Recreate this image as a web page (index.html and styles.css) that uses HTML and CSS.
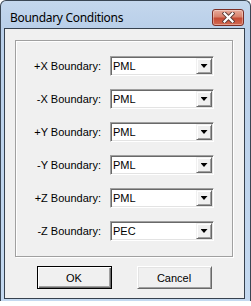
FILE: index.html
```html
<!DOCTYPE html>
<html lang="en">
<head>
    <meta charset="UTF-8">
    <title>Boundary Conditions</title>
    <link rel="stylesheet" href="styles.css">
</head>
<body>
    <div class="window">
        <div class="titlebar">
            <span class="title">Boundary Conditions</span>
            <div class="close">
                <svg width="13" height="11" viewBox="0 0 13 11">
                    <path d="M2.5 1.5 L10.5 9.5 M10.5 1.5 L2.5 9.5" stroke="#5a3a36" stroke-width="4" stroke-linecap="square"/>
                    <path d="M2.5 1.5 L10.5 9.5 M10.5 1.5 L2.5 9.5" stroke="#ffffff" stroke-width="2.2" stroke-linecap="square"/>
                </svg>
            </div>
        </div>
        <div class="client">
            <div class="group">
                <div class="row"><span class="label">+X Boundary:</span><div class="combo"><span class="value">PML</span><span class="drop"></span></div></div>
                <div class="row"><span class="label">-X Boundary:</span><div class="combo"><span class="value">PML</span><span class="drop"></span></div></div>
                <div class="row"><span class="label">+Y Boundary:</span><div class="combo"><span class="value">PML</span><span class="drop"></span></div></div>
                <div class="row"><span class="label">-Y Boundary:</span><div class="combo"><span class="value">PML</span><span class="drop"></span></div></div>
                <div class="row"><span class="label">+Z Boundary:</span><div class="combo"><span class="value">PML</span><span class="drop"></span></div></div>
                <div class="row"><span class="label">-Z Boundary:</span><div class="combo"><span class="value">PEC</span><span class="drop"></span></div></div>
            </div>
            <div class="buttons">
                <div class="btn default">OK</div>
                <div class="btn">Cancel</div>
            </div>
        </div>
    </div>
</body>
</html>
```

FILE: styles.css
```css
* {
    box-sizing: border-box;
}

body {
    margin: 0;
    background-color: #ffffff;
    font-family: "Liberation Sans", Arial, sans-serif;
    font-size: 11px;
    color: #000;
}

.window {
    width: 251px;
    height: 301px;
    border: 1px solid #3a4654;
    border-bottom: 0;
    border-radius: 6px 6px 0 0;
    background: linear-gradient(#c4d7ed, #b9cfe9 28px, #c4d9f0);
    padding: 0 5px 2px 3px;
    display: flex;
    flex-direction: column;
}

.titlebar {
    height: 27px;
    display: flex;
    align-items: flex-start;
}

.title {
    font-family: "Noto Sans", sans-serif;
    font-size: 12px;
    line-height: 15px;
    margin-top: 9px;
    margin-left: 6px;
    letter-spacing: -0.3px;
}

.close {
    margin-left: auto;
    margin-top: 8px;
    margin-right: 1px;
    width: 32px;
    height: 17px;
    border: 1px solid #7c2e26;
    border-radius: 3px;
    background: linear-gradient(#e9ab9b, #d8826d 45%, #c54a34 55%, #d36a52);
    box-shadow: inset 0 0 0 1px rgba(255, 255, 255, 0.35);
    display: flex;
    align-items: center;
    justify-content: center;
}

.client {
    flex: 1;
    border: 1px solid #36414e;
    background-color: #f0f0f0;
    padding: 11px 11px 0 10px;
}

.group {
    border: 1px solid #a0a0a0;
    box-shadow: inset 1px 1px #fff, 1px 1px #fff;
    padding: 15px 0 15px 0;
    display: flex;
    flex-direction: column;
    gap: 13px;
}

.row {
    display: flex;
    align-items: center;
    height: 20px;
}

.label {
    width: 85px;
    text-align: right;
    margin-right: 9px;
}

.combo {
    width: 104px;
    height: 20px;
    background-color: #fff;
    border: 1px solid;
    border-color: #a0a0a0 #fff #fff #a0a0a0;
    box-shadow: inset 1px 1px #696969, inset -1px -1px #e3e3e3;
    display: flex;
    align-items: center;
    padding: 1px;
}

.value {
    flex: 1;
    padding-left: 1px;
}

.drop {
    width: 16px;
    height: 16px;
    background-color: #f0f0f0;
    border: 1px solid;
    border-color: #f0f0f0 #696969 #696969 #f0f0f0;
    box-shadow: inset 1px 1px #fff, inset -1px -1px #a0a0a0;
    display: flex;
    align-items: center;
    justify-content: center;
}

.drop::after {
    content: "";
    width: 7px;
    height: 4px;
    background-color: #000;
    clip-path: polygon(0 0, 100% 0, 50% 100%);
}

.buttons {
    display: flex;
    justify-content: center;
    gap: 25px;
    margin-top: 9px;
}

.btn {
    width: 75px;
    height: 23px;
    background-color: #f0f0f0;
    border: 1px solid;
    border-color: #fff #696969 #696969 #fff;
    box-shadow: inset 1px 1px #e3e3e3, inset -1px -1px #a0a0a0;
    display: flex;
    align-items: center;
    justify-content: center;
}

.btn.default {
    border-color: #000;
    box-shadow: inset 1px 1px #fff, inset -1px -1px #696969, inset -2px -2px #a0a0a0;
}
```
